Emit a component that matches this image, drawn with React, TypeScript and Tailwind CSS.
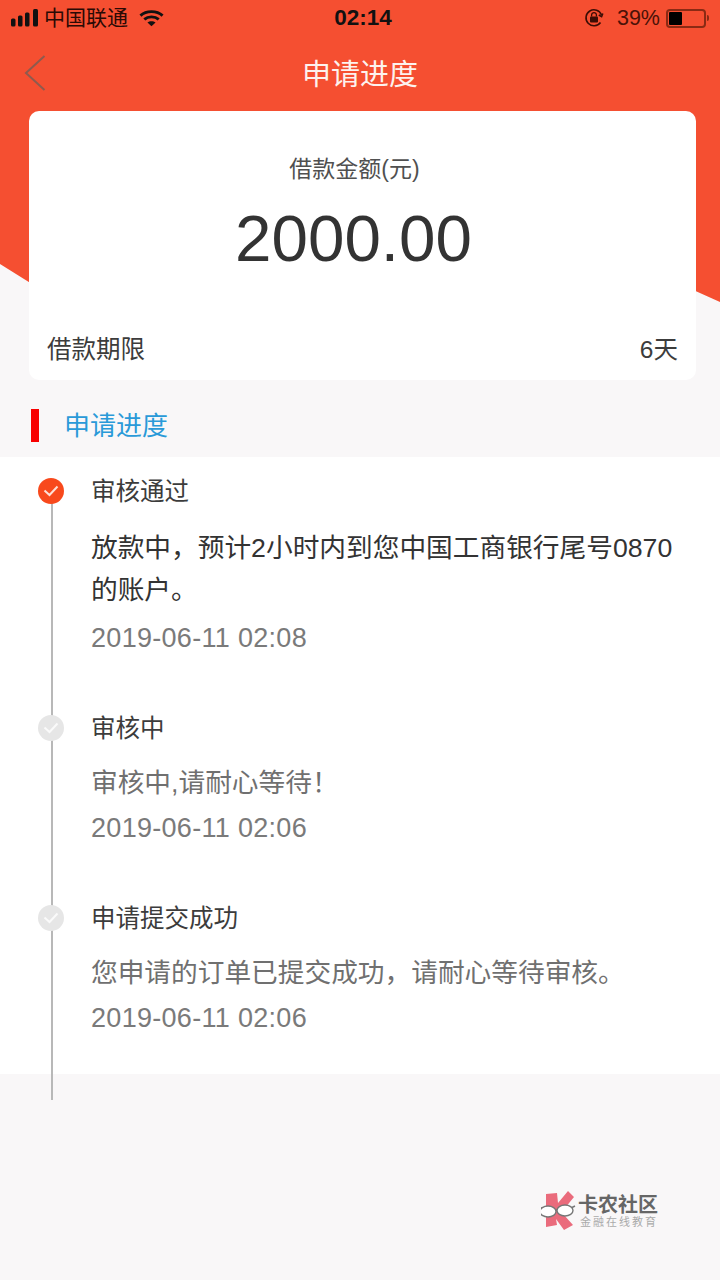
function Dot({ active }: { active?: boolean }) {
  return (
    <div className={`flex h-[26px] w-[26px] items-center justify-center rounded-full ${active ? "bg-[#f8491c]" : "bg-[#e6e6e6]"}`}>
      <svg width="16" height="12" viewBox="0 0 16 12" fill="none">
        <path d="M1.5 5.5 L6.5 10 L14.5 1.5" stroke={active ? "#fde0d6" : "#fafafa"} strokeWidth="2" />
      </svg>
    </div>
  );
}

function Step({ title, body, time, active }: { title: string; body: React.ReactNode; time: string; active?: boolean }) {
  return (
    <div className="flex pb-[36px]">
      <div className="flex w-[91px] shrink-0 justify-end pr-[27px] pt-[21px]">
        <Dot active={active} />
      </div>
      <div className="min-w-0 flex-1">
        <div className="h-[68px] pt-[18px] text-[24.5px] leading-[34px] text-[#3c3c3c]">{title}</div>
        <div className={active ? "pr-[30px] pt-[2px] text-[26.7px] leading-[42px] text-[#333333]" : "pr-[30px] pt-[1px] text-[26.7px] leading-[40px] text-[#707070]"}>{body}</div>
        <div className={`${active ? "mt-[7px]" : "mt-[5px]"} text-[27px] tracking-[0.3px] leading-[40px] text-[#7a7a7a]`}>{time}</div>
      </div>
    </div>
  );
}

export default function App() {
  return (
    <div className="relative h-[1280px] w-[720px] overflow-hidden bg-[#f9f7f8]" style={{ fontFamily: "'Liberation Sans', 'Noto Sans CJK SC', sans-serif" }}>
      <div className="absolute left-0 top-0 h-[302px] w-[720px] bg-[#f54f31] [clip-path:polygon(0_0,100%_0,100%_100%,96.67%_96.4%,4%_93.4%,0_87.4%)]" />

      <div className="relative">
        {/* status bar */}
        <div className="flex h-[36px] items-center justify-between pl-[10px] pr-[10px] text-black">
          <div className="flex w-[203px] items-center">
            <svg width="29" height="18" viewBox="0 0 29 18" fill="#111">
              <rect x="1" y="9.5" width="4.5" height="8" rx="1.5" />
              <rect x="8" y="6.5" width="4.5" height="11" rx="1.5" />
              <rect x="15" y="3.5" width="4.5" height="14" rx="1.5" />
              <rect x="23" y="0" width="5" height="17.5" rx="1.5" />
            </svg>
            <span className="ml-[5px] text-[21px] leading-[36px] text-[#2a0a05]">中国联通</span>
            <svg className="ml-[11px]" width="25" height="18" viewBox="0 0 26 18" fill="none" stroke="#111" strokeWidth="3">
              <path d="M1.5 6.5 C7.5 1 18.5 1 24.5 6.5" />
              <path d="M5.5 10.5 C9.5 7 16.5 7 20.5 10.5" />
              <path d="M13 17.5 L8.8 13.8 C11 12 15 12 17.2 13.8 Z" fill="#111" stroke="none" />
            </svg>
          </div>
          <div className="text-[22.5px] font-bold leading-[36px] text-[#111]">02:14</div>
          <div className="flex w-[197px] items-center justify-end pr-[1px]">
            <svg width="20" height="20" viewBox="0 0 20 20" fill="none" stroke="#3a0d05" strokeWidth="1.6">
              <path d="M16.5 14.5 A8 8 0 1 1 17.5 7" />
              <path d="M18.8 5.5 L17.6 8.6 L14.8 7" />
              <rect x="6" y="8.5" width="8" height="6" rx="1" fill="#3a0d05" stroke="none" />
              <path d="M7.6 8.5 V7 A2.4 2.4 0 0 1 12.4 7 V8.5" strokeWidth="1.3" />
            </svg>
            <span className="ml-[13px] text-[21.5px] leading-[36px] text-[#4a1208]">39%</span>
            <div className="ml-[6px] flex h-[19px] w-[40px] items-center rounded-[4px] border-2 border-[#8a2a14] p-[1px]">
              <div className="h-[13px] w-[13px] rounded-[1px] bg-black" />
            </div>
            <div className="ml-[1px] h-[6px] w-[2px] rounded-r-[2px] bg-[#8a2a14]" />
          </div>
        </div>

        {/* nav */}
        <div className="relative flex h-[75px] items-center justify-center">
          <svg className="absolute left-[24px] top-[19px]" width="22" height="36" viewBox="0 0 22 36" fill="none" stroke="#8f5a4e" strokeWidth="2">
            <path d="M20.5 1 L2 18 L20.5 35" />
          </svg>
          <span className="pt-[2px] text-[29px] leading-[40px] text-[#fdf2ee]">申请进度</span>
        </div>

        {/* card */}
        <div className="mx-[29px] flex h-[269px] w-[667px] flex-col rounded-[10px] bg-white">
          <div className="pr-[16px] pt-[41px] text-center text-[23px] leading-[34px] text-[#505050]">借款金额(元)</div>
          <div className="mt-[15px] pr-[18px] text-center text-[65.5px] leading-[76px] text-[#333333]">2000.00</div>
          <div className="mt-auto flex items-center justify-between px-[18px] pb-[12px] text-[24.5px] leading-[36px] text-[#3c3c3c]">
            <span>借款期限</span>
            <span>6天</span>
          </div>
        </div>

        {/* section title */}
        <div className="flex h-[77px] items-center pl-[31px] pt-[14px]">
          <div className="h-[33px] w-[8px] bg-[#f80000]" />
          <span className="ml-[25px] text-[26px] leading-[36px] text-[#2a9ad8]">申请进度</span>
        </div>

        {/* timeline */}
        <div className="relative h-[617px] bg-white">
          <div className="absolute left-[51px] top-[33px] h-[610px] w-[2px] bg-[#b8b8b8]" />
          <div className="relative">
            <Step
              active
              title="审核通过"
              body={<>放款中，预计2小时内到您中国工商银行尾号0870的账户。</>}
              time="2019-06-11 02:08"
            />
            <Step title="审核中" body="审核中,请耐心等待！" time="2019-06-11 02:06" />
            <Step title="申请提交成功" body="您申请的订单已提交成功，请耐心等待审核。" time="2019-06-11 02:06" />
          </div>
        </div>

        {/* watermark */}
        <div className="flex justify-end pr-[62px] pt-[116px]">
          <div className="flex items-center">
            <svg width="36" height="42" viewBox="5 2 36 42">
              <path d="M10 6 L21 5 L22 15 L32 3 L38 9 L29 20 L28 27 L37 37 L28 42 L20 31 L21 37 L10 39 Z" fill="#ea6b7c" />
              <path d="M4 20 L10 20 M18 22 L22 22 M35 20 L39 18" stroke="#777" strokeWidth="1.5" fill="none" />
              <ellipse cx="12" cy="23.5" rx="8" ry="5.5" fill="#fff" stroke="#777" strokeWidth="1.4" />
              <ellipse cx="29" cy="22.5" rx="8" ry="5.5" fill="#fff" stroke="#777" strokeWidth="1.4" />
            </svg>
            <div className="ml-[1px] flex flex-col">
              <span className="text-[20px] font-bold leading-[22px] text-[#666]">卡农社区</span>
              <span className="pl-[2px] text-[11px] leading-[12px] tracking-[2px] text-[#aaa]">金融在线教育</span>
            </div>
          </div>
        </div>
      </div>
    </div>
  );
}
